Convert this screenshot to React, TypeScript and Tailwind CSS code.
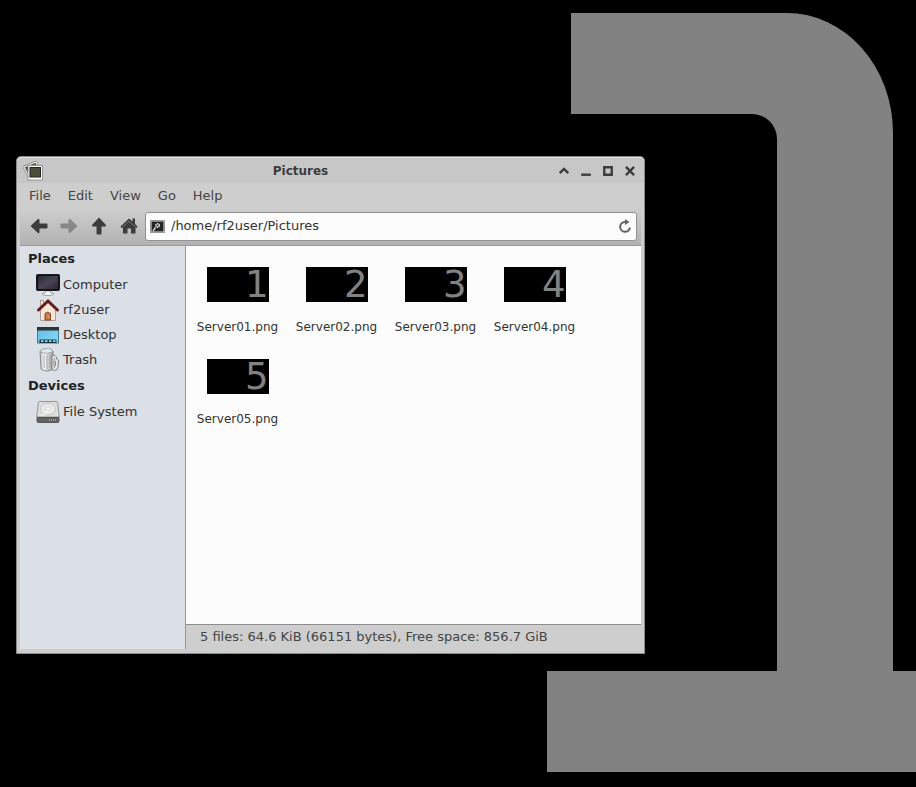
import React from "react";

const places = [
  { name: "Computer", icon: <ComputerIcon /> },
  { name: "rf2user", icon: <HouseIcon /> },
  { name: "Desktop", icon: <DesktopIcon /> },
  { name: "Trash", icon: <TrashIcon /> },
];
const devices = [{ name: "File System", icon: <DriveIcon /> }];
const files = ["1", "2", "3", "4", "5"];
const menus = ["File", "Edit", "View", "Go", "Help"];

function ComputerIcon() {
  return (
    <svg width="24" height="24" viewBox="0 0 24 24" aria-hidden="true">
      <defs>
        <linearGradient id="screen" x1="0" y1="0" x2="1" y2="1">
          <stop offset="0" stopColor="#2b2733" />
          <stop offset="0.5" stopColor="#4a4555" />
          <stop offset="1" stopColor="#2b2733" />
        </linearGradient>
      </defs>
      <path d="M9.500 18H14.500L15 20L18 21Q18 22.500 12 22.500Q6 22.500 6 21L9 20Z" fill="#fafafa" stroke="#8c8c8c" strokeWidth="0.8" />
      <rect x="0.5" y="1.5" width="23" height="16" rx="1" fill="#111" stroke="#1c1c1c" />
      <rect x="2" y="3" width="20" height="13" fill="url(#screen)" />
    </svg>
  );
}

function HouseIcon() {
  return (
    <svg width="24" height="24" viewBox="0 0 24 24" aria-hidden="true">
      <rect x="4.5" y="2.5" width="3" height="7" fill="#f3e3d8" stroke="#a58c80" strokeWidth="0.8" />
      <path d="M4.500 11.500L12 4.500L19.500 11.500V22.500H4.500Z" fill="#f8e5d8" stroke="#a08d84" strokeWidth="0.8" />
      <path d="M2.500 12L12 3L21.500 12" fill="none" stroke="#671c1c" strokeWidth="3" strokeLinecap="round" />
      <path d="M9 22V15.500Q11.500 13 14.500 15.500V22Z" fill="#c98148" stroke="#7c4720" />
      <circle cx="13" cy="19" r="0.600" fill="#ffe0a0" />
    </svg>
  );
}

function DesktopIcon() {
  return (
    <svg width="24" height="24" viewBox="0 0 24 24" aria-hidden="true">
      <defs>
        <linearGradient id="desk" x1="0" y1="0" x2="1" y2="1">
          <stop offset="0" stopColor="#5eb9e0" />
          <stop offset="1" stopColor="#8edcf7" />
        </linearGradient>
      </defs>
      <rect x="1.500" y="4.500" width="21" height="15.500" fill="url(#desk)" stroke="#3f7d96" />
      <rect x="1" y="4" width="22" height="3.500" fill="#2f3436" />
      <path d="M3.500 20V16.500H20.500V20Z" fill="#173746" />
      <path d="M5 18.200H7.500M9 18.200H11.500M13 18.200H15.500M17 18.200H19.500" stroke="#8edcf7" strokeWidth="1.700" />
    </svg>
  );
}

function TrashIcon() {
  return (
    <svg width="24" height="24" viewBox="0 0 24 24" aria-hidden="true">
      <defs>
        <linearGradient id="can" x1="0" y1="0" x2="1" y2="0">
          <stop offset="0" stopColor="#b5b8b7" />
          <stop offset="0.300" stopColor="#fafafa" />
          <stop offset="1" stopColor="#989b9a" />
        </linearGradient>
      </defs>
      <path d="M4 3L17 3L17.500 21Q11 25 5 21Z" fill="url(#can)" stroke="#777" strokeWidth="0.800" />
      <path d="M8 7V20M11 7V21M14 7V20" stroke="#999" strokeWidth="0.800" />
      <path d="M4 4Q6 0 9 1Q12 -1 15 1L17 4Q10 7 4 4Z" fill="#dceaf3" stroke="#899398" strokeWidth="0.800" />
      <path d="M16 8Q19 6 20.500 9L20.500 11L22.500 12.500V15L21.500 16L22.500 18L20.500 22Q17 23.500 16 20Z" fill="#e8e8e8" stroke="#777" strokeWidth="0.900" />
      <path d="M18.500 10Q17 15 18.500 20M19.500 13V18" fill="none" stroke="#8c8c8c" />
    </svg>
  );
}

function DriveIcon() {
  return (
    <svg width="24" height="24" viewBox="0 0 24 24" aria-hidden="true">
      <path d="M4 1.500H20Q21.500 1.500 21.700 3L23.300 17H0.700L2.300 3Q2.500 1.500 4 1.500Z" fill="#dededd" stroke="#8d8f8c" strokeWidth="0.900" />
      <path d="M1 17.500H23V21Q23 22.500 21.500 22.500H2.500Q1 22.500 1 21Z" fill="#626462" stroke="#444" strokeWidth="0.800" />
      <ellipse cx="12" cy="9" rx="7.500" ry="5.800" fill="#e9e9e8" stroke="#bdbdbd" strokeWidth="0.800" />
      <ellipse cx="12" cy="8.500" rx="2.500" ry="1.800" fill="#f8f8f8" stroke="#c5c5c5" strokeWidth="0.600" />
      <path d="M5 15Q9 15 12 11" fill="none" stroke="#fff" strokeWidth="1.200" />
      <path d="M13 20H21" stroke="#b0b0b0" strokeWidth="1.500" strokeDasharray="1 1" />
    </svg>
  );
}

function WindowIcon() {
  return (
    <svg width="22" height="20" viewBox="0 0 22 20" aria-hidden="true">
      <path d="M1 6L13 1L18 13L7 18Z" fill="#56583f" stroke="#777" strokeWidth="2.500" />
      <path d="M1 6L13 1L18 13L7 18Z" fill="#56583f" stroke="#eee" strokeWidth="1.300" />
      <rect x="5" y="4.500" width="14.500" height="14.500" fill="#fafafa" stroke="#888" strokeWidth="0.800" />
      <rect x="7" y="6.500" width="10.500" height="9.500" fill="#4b4e3a" stroke="#222" />
    </svg>
  );
}

function Arrow({ turn, color }: { turn: string; color: string }) {
  return (
    <svg width="18" height="16" viewBox="0 0 18 16" className={turn} aria-hidden="true">
      <path d="M0.500 8L8 1Q9.500 0.500 9.500 2V5.500H16.500Q17.500 5.500 17.500 6.500V9.500Q17.500 10.500 16.500 10.500H9.500V14Q9.500 15.500 8 15Z" fill={color} />
    </svg>
  );
}

function HomeGlyph() {
  return (
    <svg width="18" height="16" viewBox="0 0 18 16" aria-hidden="true">
      <path d="M0.500 8.500L9 0.500L12.500 3.500V0.500H15V6L17.500 8.500L16.500 10H15.500V15.500H11V10.500H7.500V15.500H3V10H1.500Z" fill="#3c3c3c" />
      <path d="M2 9.500L9 3.200L16 9.500" fill="none" stroke="#8c8c8c" strokeWidth="0.700" />
    </svg>
  );
}

function PathIcon() {
  return (
    <svg width="15" height="13" viewBox="0 0 15 13" aria-hidden="true">
      <rect x="0.500" y="0.500" width="14" height="12" fill="#e5e5e5" stroke="#999" />
      <rect x="1.500" y="1.500" width="12" height="10" fill="#252525" />
      <path d="M3 11L5.500 7.500" stroke="#ddd" strokeWidth="1.300" />
      <circle cx="7.500" cy="5.500" r="1.700" fill="#333" stroke="#eee" strokeWidth="1.500" strokeDasharray="1.200 0.500" />
    </svg>
  );
}

function ReloadIcon() {
  return (
    <svg width="14" height="14" viewBox="0 0 14 14" aria-hidden="true">
      <path d="M8 3H6.500A4.900 4.900 0 1 0 11.900 8.500" fill="none" stroke="#646464" strokeWidth="2" />
      <path d="M7 0L11.500 3L7 6Z" fill="#646464" />
    </svg>
  );
}

function WindowControls() {
  return (
    <div className="flex gap-1.5">
      {[
        ["Shade", "M3.500 9.500L7.500 5.500L11.500 9.500"],
        ["Minimize", "M3 11H12"],
        ["Maximize", "M4 4H11V11H4Z"],
        ["Close", "M3.700 3.700L11.300 11.300M11.300 3.700L3.700 11.300"],
      ].map(([label, d]) => (
        <button key={label} aria-label={label} className="h-4 w-4">
          <svg width="16" height="16" viewBox="0 0 15 15" aria-hidden="true">
            <path d={d} fill="none" stroke="#3c3c3c" strokeWidth="2.200" />
          </svg>
        </button>
      ))}
    </div>
  );
}

function Wallpaper() {
  return (
    <div className="absolute inset-0 overflow-hidden" aria-hidden="true">
      <div className="absolute top-[13px] left-[571px] h-[660px] w-[322px] rounded-tr-[106px_120px] bg-[#828282]" />
      <div className="absolute top-[114px] left-[571px] h-[557px] w-[206px] rounded-tr-[25px] bg-black" />
      <div className="absolute top-[671px] right-0 left-[547px] h-[101px] bg-[#828282]" />
    </div>
  );
}

function SideList({ title, items }: { title: string; items: { name: string; icon: React.ReactNode }[] }) {
  return (
    <section className="pb-px">
      <h2 className="h-[26px] pl-2 leading-[25px] font-bold text-[#222]">{title}</h2>
      <ul>
        {items.map((item) => (
          <li key={item.name}>
            <button className="flex h-[25px] w-full items-center gap-[3px] pl-4 text-left text-[#333]">
              {item.icon}
              {item.name}
            </button>
          </li>
        ))}
      </ul>
    </section>
  );
}

export default function App() {
  return (
    <main className="relative min-h-screen bg-black px-4 pt-[156px] font-['DejaVu_Sans',sans-serif] text-[13px]">
      <Wallpaper />
      <div className="relative w-full max-w-[629px] rounded-t-[5px] border border-[#8a8a8a] bg-[#cecece] px-[3px] pb-1 text-[#444]">
        <header className="-mx-[3px] flex h-[26px] items-center rounded-t-[4px] border-t border-[#dedede] bg-[#c7c7c7] px-1.5">
          <WindowIcon />
          <h1 className="flex-1 text-center text-xs font-bold text-[#3c3c3c]">Pictures</h1>
          <WindowControls />
        </header>
        <nav className="flex h-[25px] items-center gap-[17px] pl-[9px]">
          {menus.map((menu) => (
            <button key={menu}>{menu}</button>
          ))}
        </nav>
        <div className="flex h-[38px] items-center border-b border-[#999] bg-linear-to-b from-[#cecece] to-[#b2b2b2] pr-1 pb-px pl-2.5">
          <div className="flex w-[115px] gap-3">
            <button aria-label="Back"><Arrow turn="" color="#3c3c3c" /></button>
            <button aria-label="Forward"><Arrow turn="rotate-180" color="#888" /></button>
            <button aria-label="Up"><Arrow turn="rotate-90" color="#3c3c3c" /></button>
            <button aria-label="Home"><HomeGlyph /></button>
          </div>
          <div className="flex h-[29px] flex-1 items-center gap-1.5 rounded-[3px] border border-[#929292] bg-[#fcfcfc] px-1">
            <PathIcon />
            <input aria-label="Location" defaultValue="/home/rf2user/Pictures" className="min-w-0 flex-1 text-[#333] outline-none" />
            <button aria-label="Reload"><ReloadIcon /></button>
          </div>
        </div>
        <div className="flex">
          <aside className="w-[166px] shrink-0 border-r border-[#999] bg-[#dbdfe6]">
            <SideList title="Places" items={places} />
            <SideList title="Devices" items={devices} />
          </aside>
          <section className="min-w-0 flex-1">
            <ul className="flex h-[378px] flex-wrap content-start bg-[#fcfcfc] pt-[21px] pl-0.5">
              {files.map((n) => (
                <li key={n} className="flex h-[92px] w-[99px] flex-col items-center">
                  <div className="flex h-[35px] w-[62px] items-center justify-end bg-black text-[37px] leading-[35px] text-[#828282]">
                    {n}
                  </div>
                  <span className="mt-4 text-xs leading-[18px] text-[#333]">Server0{n}.png</span>
                </li>
              ))}
            </ul>
            <footer className="h-[25px] border-t border-[#8c8c8c] pl-3.5 leading-6">
              5 files: 64.6 KiB (66151 bytes), Free space: 856.7 GiB
            </footer>
          </section>
        </div>
      </div>
    </main>
  );
}
